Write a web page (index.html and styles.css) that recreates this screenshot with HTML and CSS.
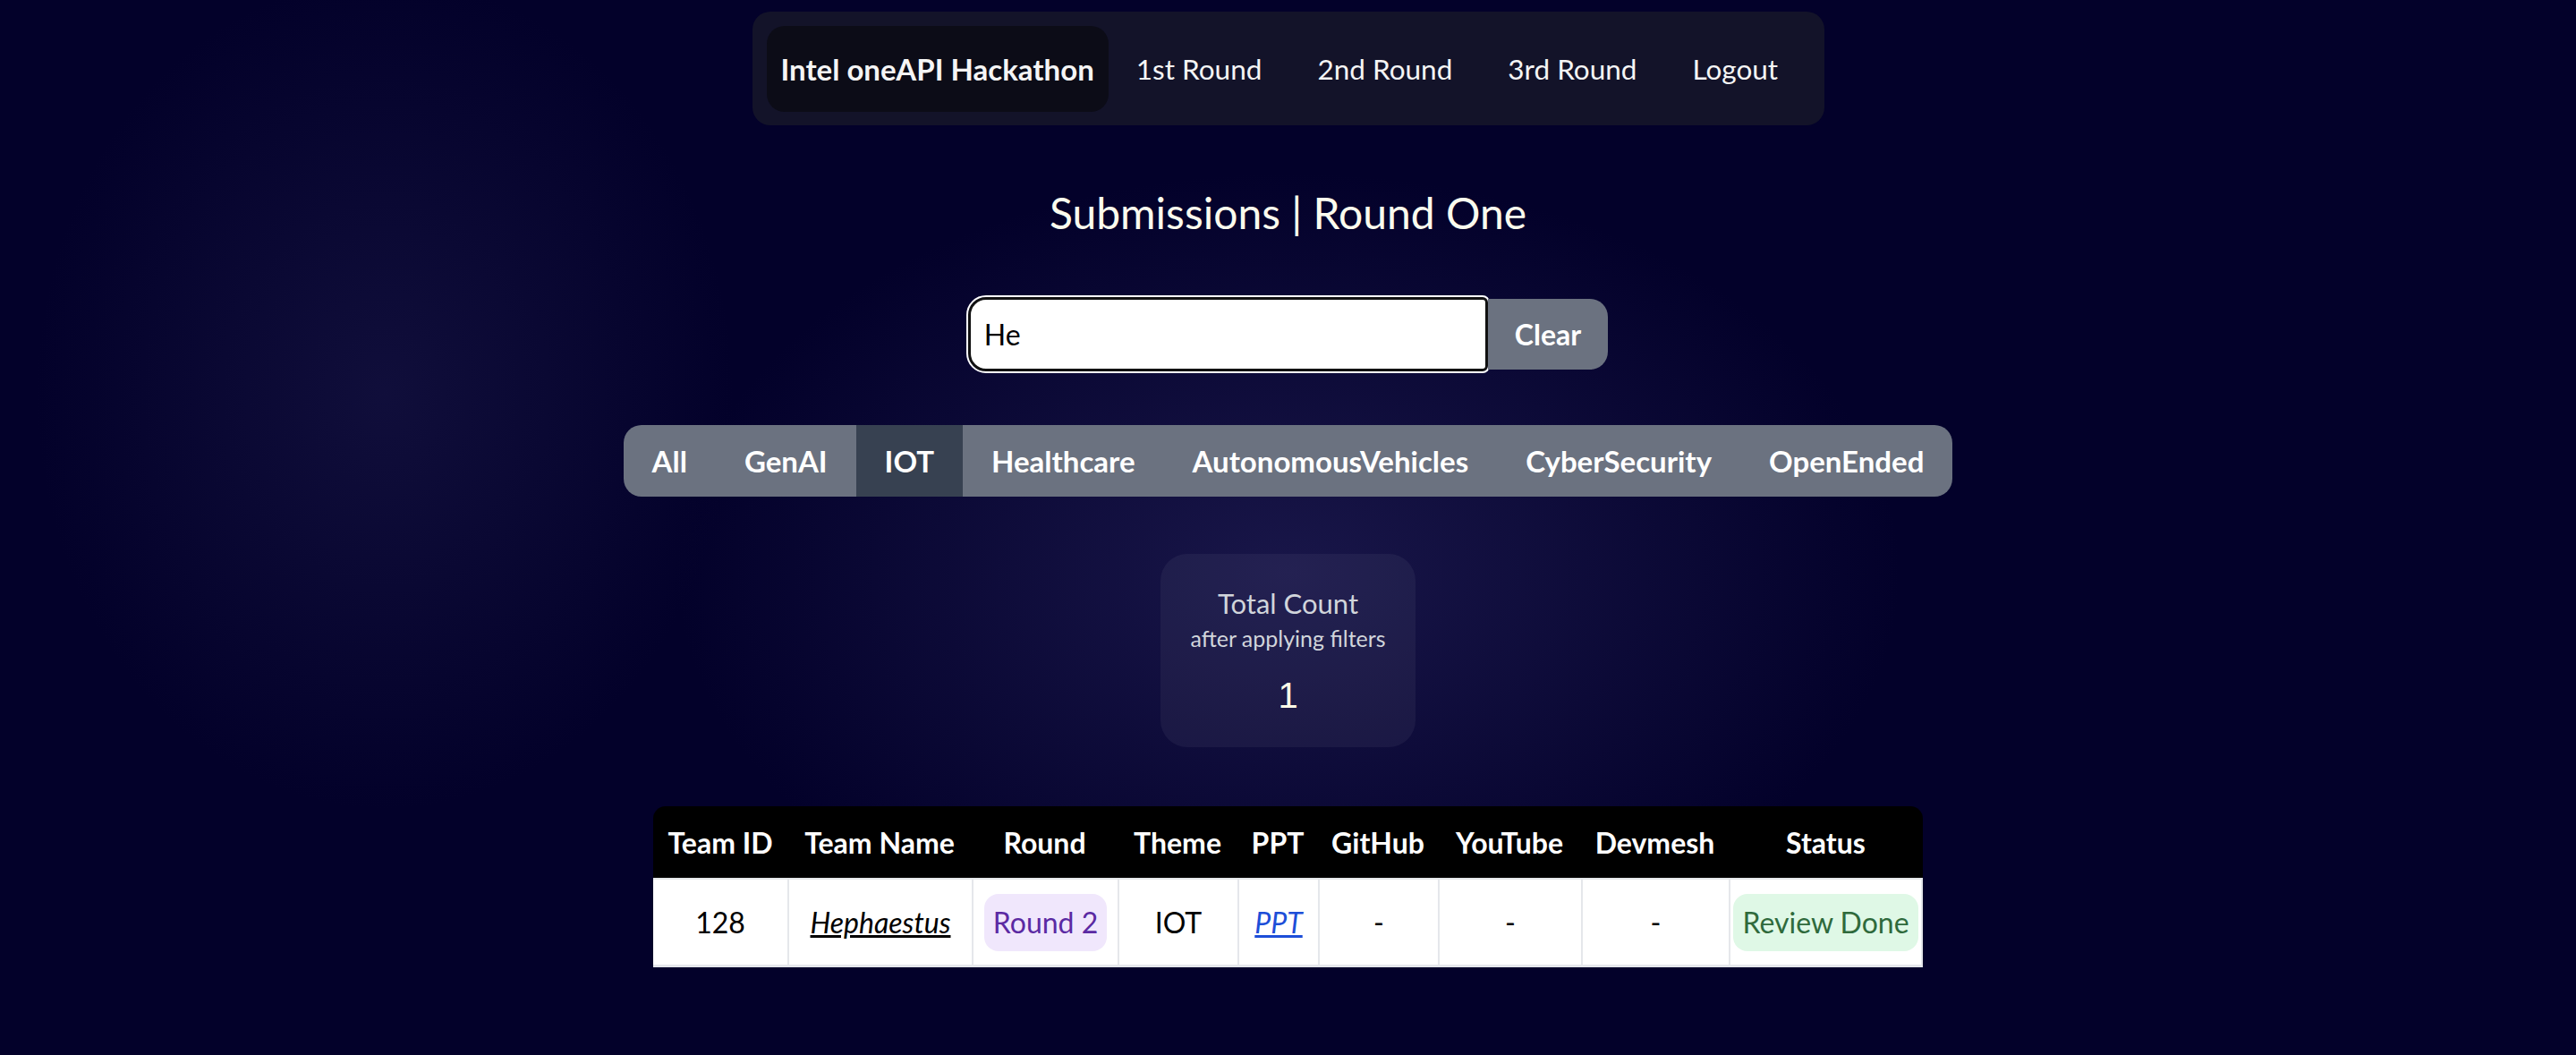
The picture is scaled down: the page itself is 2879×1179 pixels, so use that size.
FILE: index.html
```html
<!DOCTYPE html>
<html lang="en">
<head>
<meta charset="utf-8">
<title>Submissions | Round One</title>
<link rel="stylesheet" href="styles.css">
</head>
<body class="page">
  <nav class="topnav">
    <a class="brand" href="#">Intel oneAPI Hackathon</a>
    <a class="nav-link" href="#">1st Round</a>
    <a class="nav-link" href="#">2nd Round</a>
    <a class="nav-link" href="#">3rd Round</a>
    <a class="nav-link" href="#">Logout</a>
  </nav>

  <h1 class="title">Submissions | Round One</h1>

  <div class="search">
    <input class="search-input" type="text" value="He">
    <button class="clear-btn" type="button">Clear</button>
  </div>

  <div class="filters">
    <button class="filter-btn" type="button">All</button>
    <button class="filter-btn" type="button">GenAI</button>
    <button class="filter-btn filter-btn--active" type="button">IOT</button>
    <button class="filter-btn" type="button">Healthcare</button>
    <button class="filter-btn" type="button">AutonomousVehicles</button>
    <button class="filter-btn" type="button">CyberSecurity</button>
    <button class="filter-btn" type="button">OpenEnded</button>
  </div>

  <div class="count-card">
    <div class="count-title">Total Count</div>
    <div class="count-sub">after applying filters</div>
    <div class="count-value">1</div>
  </div>

  <table class="subs">
    <colgroup>
      <col class="c-id"><col class="c-name"><col class="c-round"><col class="c-theme"><col class="c-ppt"><col class="c-gh"><col class="c-yt"><col class="c-dm"><col class="c-status">
    </colgroup>
    <thead>
      <tr>
        <th>Team ID</th><th>Team Name</th><th>Round</th><th>Theme</th><th>PPT</th><th>GitHub</th><th>YouTube</th><th>Devmesh</th><th>Status</th>
      </tr>
    </thead>
    <tbody>
      <tr>
        <td>128</td>
        <td><a class="team-link" href="#">Hephaestus</a></td>
        <td><span class="badge badge--round">Round 2</span></td>
        <td>IOT</td>
        <td><a class="ppt-link" href="#">PPT</a></td>
        <td>-</td>
        <td>-</td>
        <td>-</td>
        <td><span class="badge badge--done">Review Done</span></td>
      </tr>
    </tbody>
  </table>
</body>
</html>
```

FILE: styles.css
```css
* { box-sizing: border-box; }

html, body { margin: 0; }

.page {
  min-height: 100vh;
  padding-top: 13px;
  display: flex;
  flex-direction: column;
  align-items: center;
  font-family: Lato, "Open Sans", sans-serif;
  color: #f3f3f3;
  background:
    radial-gradient(ellipse 520px 620px at 430px 440px, rgba(36, 34, 84, 0.4), rgba(36, 34, 84, 0) 75%),
    radial-gradient(ellipse 950px 620px at 1440px 640px, rgba(34, 31, 86, 0.7), rgba(34, 31, 86, 0) 72%),
    #03012a;
}

/* Top navigation */
.topnav {
  display: flex;
  align-items: center;
  width: 1198px;
  height: 127px;
  padding: 16px;
  background: #131329;
  border-radius: 20px;
}

.brand,
.nav-link {
  flex-shrink: 0;
  white-space: nowrap;
  text-decoration: none;
  color: #f5f5f5;
  line-height: 48px;
}

.brand {
  font-size: 33px;
  font-weight: 700;
  padding: 24px 16px;
  background: #0c0c17;
  border-radius: 20px;
}

.nav-link {
  font-size: 31.5px;
  padding: 0 31px;
}

/* Title */
.title {
  margin: 70px 0 0;
  font-size: 48px;
  font-weight: 400;
  line-height: 56px;
  color: #fbfbee;
}

/* Search */
.search {
  margin-top: 66px;
  display: flex;
  align-items: center;
}

.search-input {
  width: 581px;
  height: 83px;
  padding: 0 15px;
  font-family: Lato, "Open Sans", sans-serif;
  font-size: 32px;
  color: #000;
  background: #fff;
  border: 3px solid #111;
  border-radius: 20px 6px 6px 20px;
  outline: 2px solid #fff;
}

.clear-btn {
  height: 79px;
  padding: 0 30px;
  font-family: Lato, "Open Sans", sans-serif;
  font-size: 32px;
  font-weight: 700;
  color: #fff;
  background: #6b7280;
  border: none;
  border-radius: 0 20px 20px 0;
}

/* Theme filters */
.filters {
  margin-top: 60px;
  display: flex;
  height: 80px;
  background: #6b7280;
  border-radius: 20px;
  overflow: hidden;
}

.filter-btn {
  padding: 0 32px;
  font-family: Lato, "Open Sans", sans-serif;
  font-size: 33px;
  font-weight: 700;
  color: #fff;
  background: transparent;
  border: none;
  white-space: nowrap;
}

.filter-btn--active {
  background: #374151;
}

/* Count card */
.count-card {
  margin-top: 64px;
  width: 285px;
  padding: 36px 16px 34px;
  text-align: center;
  background: rgba(255, 255, 255, 0.05);
  border-radius: 30px;
}

.count-title {
  font-size: 31px;
  line-height: 39px;
  color: #d1d5db;
}

.count-sub {
  margin-top: 4px;
  font-size: 25px;
  line-height: 31px;
  color: #d1d5db;
}

.count-value {
  margin-top: 24px;
  font-family: "Liberation Sans", Arial, sans-serif;
  font-size: 40px;
  line-height: 48px;
  color: #fdfde8;
}

/* Table */
.subs {
  margin-top: 66px;
  width: 1419px;
  table-layout: fixed;
  border-collapse: separate;
  border-spacing: 0;
  text-align: center;
  font-size: 32px;
}

.c-id { width: 150px; }
.c-name { width: 206px; }
.c-round { width: 163px; }
.c-theme { width: 134px; }
.c-ppt { width: 90px; }
.c-gh { width: 134px; }
.c-yt { width: 160px; }
.c-dm { width: 165px; }
.c-status { width: 217px; }

.subs th {
  height: 80px;
  padding: 0;
  font-weight: 700;
  color: #fff;
  background: #000;
  white-space: nowrap;
}

.subs th:first-child { border-top-left-radius: 14px; }
.subs th:last-child { border-top-right-radius: 14px; }

.subs td {
  height: 100px;
  padding: 0;
  color: #000;
  background: #fff;
  border-top: 2px solid #e5e7eb;
  border-bottom: 3px solid #e5e7eb;
  border-left: 2px solid #e5e7eb;
  white-space: nowrap;
}

.subs td:first-child { border-left: none; }
.subs td:last-child { border-right: 2px solid #e5e7eb; }

.team-link {
  color: #000;
  font-style: italic;
  text-decoration: underline;
}

.ppt-link {
  color: #1d4ed8;
  font-style: italic;
  text-decoration: underline;
}

.badge {
  display: inline-block;
  padding: 8px 10px;
  line-height: 48px;
  border-radius: 16px;
}

.badge--round {
  background: #f0e7fc;
  color: #5b2aa3;
}

.badge--done {
  background: #dff8e6;
  color: #2f6a3c;
}
```
